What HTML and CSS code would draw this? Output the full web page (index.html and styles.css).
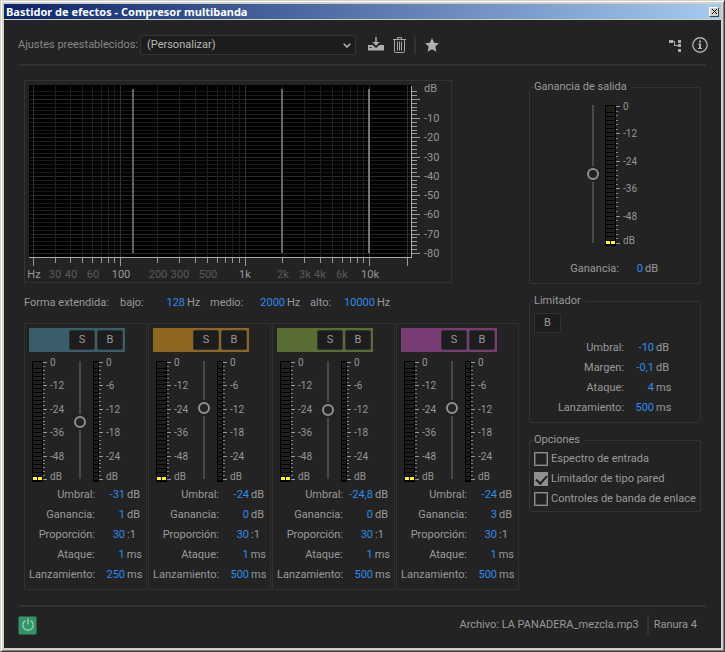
FILE: index.html
```html
<!DOCTYPE html>
<html lang="es">
<head>
<meta charset="utf-8">
<title>Bastidor de efectos - Compresor multibanda</title>
<link rel="stylesheet" href="styles.css">
</head>
<body>
<div class="window">
  <header class="titlebar">
    <h1>Bastidor de efectos - Compresor multibanda</h1>
    <button class="close" type="button" aria-label="Cerrar">
      <svg width="5" height="5" viewBox="0 0 5 5" shape-rendering="crispEdges"><path d="M0 0h1v1H0zM1 1h1v1H1zM2 2h1v1H2zM3 3h1v1H3zM4 4h1v1H4zM4 0h1v1H4zM3 1h1v1H3zM1 3h1v1H1zM0 4h1v1H0z" fill="#000"/></svg>
    </button>
  </header>

  <div class="content">
    <div class="toolbar">
      <label for="preset">Ajustes preestablecidos:</label>
      <div class="preset">
        <select id="preset"><option>(Personalizar)</option></select>
        <svg width="8" height="5" viewBox="0 0 8 5"><path d="M.7.7 4 4 7.300 .7" fill="none" stroke="#b8b8b8" stroke-width="1.500"/></svg>
      </div>
      <button class="icon save" type="button" aria-label="Guardar ajuste">
        <svg width="16" height="16" viewBox="0 0 16 16" fill="#adadad"><path d="M7.300 0h1.400v5h3L8 8.700 4.300 5h3z"/><path d="M0 8h4.500L8 11l3.500-3H16v5.500H0zM1.500 10v1h2v-1z" fill-rule="evenodd"/></svg>
      </button>
      <button class="icon trash" type="button" aria-label="Eliminar ajuste">
        <svg width="13" height="16" viewBox="0 0 13 16" fill="none" stroke="#a6a6a6"><path d="M0 2.500h13M4.500 2V.5h4V2M1.500 3v11.500q0 1 1 1h8q1 0 1-1V3M4.500 4.500v9M6.500 4.500v9M8.500 4.500v9"/></svg>
      </button>
      <span class="separator"></span>
      <button class="icon star" type="button" aria-label="Favorito">
        <svg width="14" height="14" viewBox="0 0 14 14"><path d="m7 0 2.100 4.700 4.900.5-3.700 3.400 1.100 5.200L7 11.200l-4.400 2.600 1.100-5.200L0 5.200l4.900-.5z" fill="#b0b0b0"/></svg>
      </button>
      <button class="icon routing" type="button" aria-label="Enrutamiento">
        <svg width="13" height="13" viewBox="0 0 13 13" fill="#adadad" shape-rendering="crispEdges"><path d="M0 1h4v3H0zM9 1h3v3H9zM9 5h3v3H9zM9 10h3v3H9zM4 2h2v4h3v1H5V3H4z"/></svg>
      </button>
      <button class="icon info" type="button" aria-label="Información">
        <svg width="16" height="16" viewBox="0 0 16 16" fill="#adadad"><circle cx="8" cy="8" r="7.200" fill="none" stroke="#adadad" stroke-width="1.400"/><path d="M7 3.500h2v2H7zM6 6.500h3V11h1v1H6v-1h1V7.500H6z"/></svg>
      </button>
    </div>
    <hr>

    <main class="main">
      <div class="left">
        <div class="graph" id="graph"></div>
        <div class="crossover">
          <span class="lead">Forma extendida:</span>
          <label for="low">bajo:</label><input id="low" class="hot" value="128"><span class="unit">Hz</span>
          <label for="mid">medio:</label><input id="mid" class="hot" value="2000"><span class="unit">Hz</span>
          <label for="high">alto:</label><input id="high" class="hot" value="10000"><span class="unit">Hz</span>
        </div>
        <div class="bands" id="bands"></div>
      </div>

      <div class="right">
        <fieldset class="output">
          <legend>Ganancia de salida</legend>
          <div class="meters">
            <input class="slider" type="range" min="-30" max="30" value="0" aria-label="Ganancia de salida">
            <div id="output-meter"></div>
          </div>
          <div class="params">
            <div class="row"><label for="out">Ganancia:</label><input id="out" class="hot" value="0"><span class="unit">dB</span></div>
          </div>
        </fieldset>
        <fieldset class="limiter">
          <legend>Limitador</legend>
          <button class="toggle" type="button">B</button>
          <div class="params">
            <div class="row"><label for="l1">Umbral:</label><input id="l1" class="hot" value="-10"><span class="unit">dB</span></div>
            <div class="row"><label for="l2">Margen:</label><input id="l2" class="hot" value="-0,1"><span class="unit">dB</span></div>
            <div class="row"><label for="l3">Ataque:</label><input id="l3" class="hot" value="4"><span class="unit">ms</span></div>
            <div class="row"><label for="l4">Lanzamiento:</label><input id="l4" class="hot" value="500"><span class="unit">ms</span></div>
          </div>
        </fieldset>
        <fieldset class="options">
          <legend>Opciones</legend>
          <label><input type="checkbox">Espectro de entrada</label>
          <label><input type="checkbox" checked>Limitador de tipo pared</label>
          <label><input type="checkbox">Controles de banda de enlace</label>
        </fieldset>
      </div>
    </main>

    <hr>
    <footer class="footer">
      <button class="power" type="button" aria-label="Activar">
        <svg width="14" height="14" viewBox="0 0 14 14" fill="none" stroke="#a5c9b6" stroke-width="1.300"><path d="M4.300 2.600a5.200 5.200 0 1 0 5.400 0M7 .5v6"/></svg>
      </button>
      <span class="file">Archivo: LA PANADERA_mezcla.mp3</span>
      <span class="separator"></span>
      <span>Ranura 4</span>
    </footer>
  </div>
</div>
<script src="script.js"></script>
</body>
</html>
```
FILE: styles.css
```css
* { box-sizing: border-box; }

body {
  margin: 0;
  background: #232323;
  color: #9a9a9a;
  font: 11px/20px Roboto, "Noto Sans", sans-serif;
}

button, input, select { font: inherit; color: inherit; margin: 0; }

button { padding: 0; }

svg { display: block; flex: none; }

.window {
  min-height: 100vh;
  padding: 2px;
  display: flex;
  flex-direction: column;
  background: #d4d0c8;
  border: 1px solid #d4d0c8;
  border-right-color: #404040;
  border-bottom-color: #404040;
  box-shadow: inset 1px 1px #fff, inset -1px -1px #808080;
}

.titlebar {
  height: 16px;
  margin: 1px 1px 0;
  padding: 0 2px;
  display: flex;
  align-items: center;
  justify-content: space-between;
  background: linear-gradient(90deg, #0a246a, #a6caf0);
  border-bottom: 1px solid #d4d0c8;
}

.titlebar h1 {
  margin: 0;
  color: #fff;
  font: bold 11px/15px "Noto Sans", sans-serif;
}

.close {
  width: 10px;
  height: 10px;
  display: grid;
  place-items: center;
  background: #d4d0c8;
  border: 1px solid #fff;
  border-right-color: #404040;
  border-bottom-color: #404040;
}

.content {
  flex: 1;
  margin: 0 1px 1px;
  padding-top: 15px;
  background: #232323;
}

hr {
  height: 2px;
  margin: 0 15px;
  border: 0;
  background: #323232;
}

.toolbar {
  display: flex;
  align-items: center;
  padding: 0 13px 9px 14px;
}

.toolbar label { color: #868686; width: 122px; white-space: nowrap; }

.preset { position: relative; width: 216px; }

.preset select {
  display: block;
  width: 100%;
  height: 20px;
  padding: 0 6px;
  appearance: none;
  background: #1d1d1d;
  border: 1px solid #343434;
  border-radius: 2px;
  color: #b8b8b8;
  line-height: 18px;
}

.preset svg { position: absolute; right: 5px; top: 8px; pointer-events: none; }

.icon { background: none; border: 0; }
.save { margin-left: 12px; }
.trash { margin: 0 8px 0 9px; }
.star { margin-left: 9px; }
.routing { margin-left: auto; }
.info { margin-left: 10px; }

.separator { width: 2px; height: 18px; background: #323232; }

.main {
  display: grid;
  grid-template-columns: minmax(0, 1fr) 172px;
  gap: 10px;
  padding: 14px 20px 15px;
}

.graph {
  width: 428px;
  border: 1px solid #333;
}

.graph text, .meter text { fill: #969696; }
.graph .dim { fill: #5a5a5a; }

.crossover { display: flex; margin: 10px 0; }
.crossover .lead { width: 96px; white-space: nowrap; }
.crossover label { width: 25px; }
.crossover label[for="mid"] { width: 35px; }
.crossover .hot { width: 40px; }
.crossover .unit { width: 23px; }

.hot {
  width: 30px;
  height: 20px;
  padding: 0;
  border: 0;
  background: none;
  color: #2d8ceb;
  text-align: right;
}

.unit { margin-left: 2px; }

.bands {
  display: grid;
  grid-template-columns: repeat(4, 1fr);
  gap: 1px;
}

.band { padding: 4px; border: 1px solid #303030; min-width: 0; }

.strip {
  width: 96px;
  height: 24px;
  padding: 2px;
  display: flex;
  justify-content: flex-end;
  gap: 2px;
}

.blue { background: #385d6b; }
.amber { background: #8f661e; }
.green { background: #5a6e33; }
.purple { background: #793b73; }

.toggle {
  display: block;
  width: 27px;
  height: 20px;
  background: #1d1d1d;
  border: 1px solid #303030;
  border-radius: 2px;
  line-height: 18px;
}

.strip .toggle { width: 26px; }

.meters { display: flex; align-items: flex-start; }
.band .meters { margin: 9px 0 3px 3px; }

.meter { overflow: visible; font-size: 10px; }

.slider {
  width: 14px;
  height: 132px;
  margin: -7px 6px -4px 0;
  appearance: none;
  writing-mode: vertical-lr;
  direction: rtl;
  background: linear-gradient(#484848, #484848) center / 2px 118px no-repeat;
}

.slider::-webkit-slider-thumb {
  appearance: none;
  width: 12px;
  height: 12px;
  border: 2px solid #8f8f8f;
  border-radius: 50%;
  background: #232323;
  box-shadow: 0 0 0 2px #232323;
}

.row { display: flex; height: 20px; white-space: nowrap; }
.row label { width: 66px; text-align: right; }

fieldset {
  min-width: 0;
  margin: 0 0 10px;
  padding: 0 4px 4px;
  border: 1px solid #333;
  border-radius: 2px;
}

legend { padding: 0 4px 0 0; line-height: 14px; }

.output .meters { margin: 11px 0 13px 52px; }
.output .slider {
  height: 150px;
  margin: -6px 5px -3px 0;
  background-size: 2px 138px;
}
.output .row label { width: 85px; }
.output .row .hot { width: 24px; }

.limiter .toggle { margin: 5px 0; }
.limiter .row label { width: 90px; }

.options { margin: 0; padding: 2px 4px; }
.options label { display: flex; align-items: center; gap: 3px; white-space: nowrap; }

.options input {
  flex: none;
  width: 14px;
  height: 14px;
  appearance: none;
  display: grid;
  place-items: center;
  border: 1px solid #8f8f8f;
  outline: 1px solid #505050;
  outline-offset: -2px;
}

.options input:checked { background: #8f8f8f; outline: 0; }

.options input:checked::after {
  content: "";
  width: 5px;
  height: 9px;
  margin-bottom: 3px;
  border: solid #1d1d1d;
  border-width: 0 2px 2px 0;
  rotate: 42deg;
}

.footer { display: flex; align-items: center; padding: 8px 24px 12px 14px; }
.footer .file { margin-left: auto; margin-right: 8px; }
.footer .separator { height: 20px; margin-right: 5px; }

.power {
  width: 19px;
  height: 19px;
  display: grid;
  place-items: center;
  background: #2d9866;
  border: 1px solid #36594a;
  border-radius: 2px;
}
```
FILE: script.js
```js
const rect = (x, y, w, h, fill) =>
  `<rect x="${x}" y="${y}" width="${w}" height="${h}" fill="${fill}"/>`;

/* Level meter with its tick scale. */
function meter(cols, height, labels, width, lit) {
  const bar = cols * 5 + 1;
  let s = rect(0, 0, bar, height, '#000');
  for (let y = height - 5, first = true; y > -1; y -= 4, first = false) {
    if (first && lit) {
      for (let c = 0; c < cols; c++) s += rect(1 + c * 5, y, 4, 3, '#ffff00');
    } else {
      s += rect(1, Math.max(y, 1), bar - 2, 3, '#1d1d1d');
    }
  }
  const span = height - 4;
  for (let i = 0; i <= 30; i++) {
    const major = i % 6 === 0;
    s += rect(bar, Math.round(1 + span * i / 30), major ? 4 : 2, 1, major ? '#999' : '#858585');
  }
  labels.forEach((t, i) => {
    const y = Math.round(1 + span * i / 5) + (i === 5 ? 1 : 4);
    s += `<text x="${bar + 7}" y="${y}">${t}</text>`;
  });
  return `<svg class="meter" width="${width}" height="${height}" shape-rendering="crispEdges">${s}</svg>`;
}

/* Frequency graph: logarithmic Hz axis, linear dB axis. */
function graph() {
  const X = f => Math.floor(8.2 + 124.67 * Math.log10(f / 20));
  const Y = k => Math.floor(18.3 + 3.85 * k);
  let s = rect(4, 4, 383, 172, '#000');
  const freqs = [];
  [10, 100, 1000, 10000].forEach(d => {
    for (let m = 1; m < 10; m++) if (d * m >= 20 && d * m <= 20000) freqs.push(d * m);
  });
  const isMajor = f => [20, 100, 1000, 10000, 20000].includes(f);
  for (let k = -2; k <= 40; k++) {
    const major = k % 5 === 0;
    s += rect(5, Y(k), 381, 1, major ? '#2a2a2a' : '#191919');
    s += rect(387, Y(k), major ? 8 : 5, 1, '#999');
  }
  freqs.forEach(f => {
    s += rect(X(f), 5, 1, 171, isMajor(f) ? '#303030' : '#1e1e1e');
    s += rect(X(f), 177, 1, isMajor(f) ? 8 : 5, '#999');
  });
  s += rect(4, 176, 383, 1, '#aaa') + rect(386, 5, 1, 172, '#aaa');
  s += rect(107, 8, 2, 164, '#626262') + rect(256, 8, 2, 164, '#686868') + rect(343, 8, 2, 164, '#747474');
  [[9, 'Hz'], [30, '30', 1], [46, '40', 1], [68, '60', 1], [96, '100'], [133, '200', 1],
   [155, '300', 1], [183, '500', 1], [220, '1k'], [258, '2k', 1], [280, '3k', 1],
   [295, '4k', 1], [317, '6k', 1], [345, '10k']].forEach(([x, t, dim]) => {
    s += `<text x="${x}" y="197" text-anchor="middle"${dim ? ' class="dim"' : ''}>${t}</text>`;
  });
  s += '<text x="399" y="11">dB</text>';
  for (let d = 1; d <= 8; d++) s += `<text x="399" y="${Y(d * 5) + 4}">-${d}0</text>`;
  return `<svg width="426" height="201" shape-rendering="crispEdges">${s}</svg>`;
}

const bands = [
  ['blue', '-31', '1', '250', -31],
  ['amber', '-24', '0', '500', -24],
  ['green', '-24,8', '0', '500', -25],
  ['purple', '-24', '3', '500', -24]
];
const wide = ['0', '-12', '-24', '-36', '-48', 'dB'];
const narrow = ['0', '-6', '-12', '-18', '-24', 'dB'];

document.getElementById('graph').innerHTML = graph();
document.getElementById('output-meter').innerHTML = meter(2, 141, wide, 45, true);
document.getElementById('bands').innerHTML = bands.map(([color, threshold, gain, release, pos], i) => {
  const rows = [['Umbral:', threshold, 'dB'], ['Ganancia:', gain, 'dB'], ['Proporción:', '30', ':1'],
    ['Ataque:', '1', 'ms'], ['Lanzamiento:', release, 'ms']];
  return `<section class="band">
    <div class="strip ${color}"><button class="toggle" type="button">S</button><button class="toggle" type="button">B</button></div>
    <div class="meters">${meter(2, 121, wide, 41, true)}
      <input class="slider" type="range" min="-60" max="0" value="${pos}" aria-label="Umbral">
      ${meter(1, 121, narrow, 24, false)}</div>
    <div class="params">${rows.map(([name, value, unit], j) =>
      `<div class="row"><label for="b${i}${j}">${name}</label><input id="b${i}${j}" class="hot" value="${value}"><span class="unit">${unit}</span></div>`).join('')}</div>
  </section>`;
}).join('');
```
